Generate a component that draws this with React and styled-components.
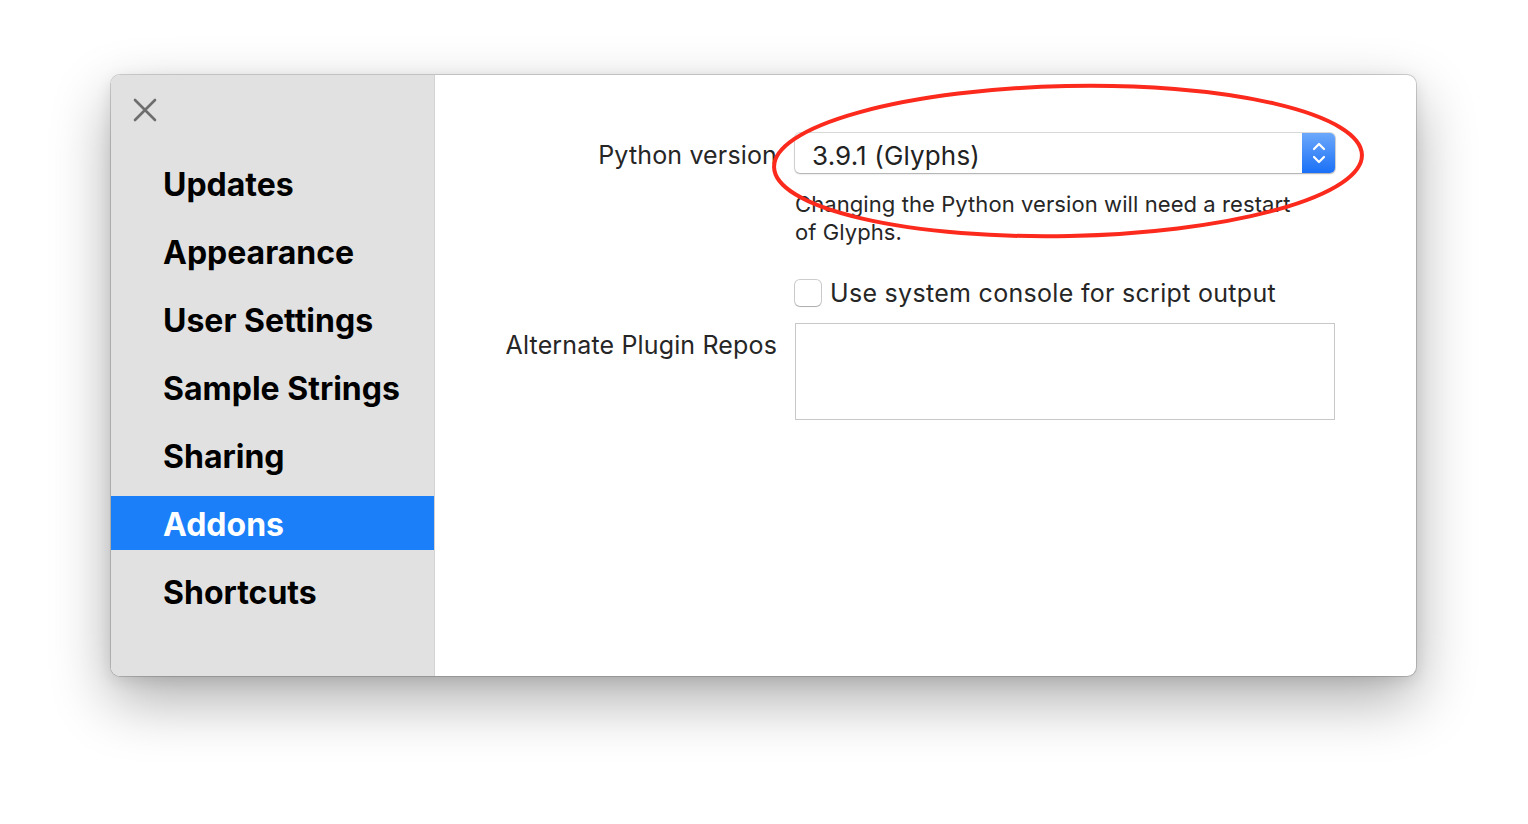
import React from "react";
import styled, { createGlobalStyle } from "styled-components";

const GlobalStyle = createGlobalStyle`
  html, body {
    margin: 0;
    padding: 0;
    background: #ffffff;
  }
  body {
    font-family: Inter, "Noto Sans", "Liberation Sans", sans-serif;
    -webkit-font-smoothing: antialiased;
  }
`;

const Page = styled.div`
  width: 1528px;
  height: 824px;
  padding: 75px 0 0 111px;
  box-sizing: border-box;
`;

const Window = styled.div`
  position: relative;
  width: 1305px;
  height: 601px;
  display: flex;
  border-radius: 9px;
  overflow: hidden;
  background: #fff;
  box-shadow: 0 0 0 1px rgba(0, 0, 0, 0.16), 0 24px 60px rgba(0, 0, 0, 0.32),
    0 4px 16px rgba(0, 0, 0, 0.1);
`;

const Sidebar = styled.nav`
  width: 323px;
  flex-shrink: 0;
  background: #e1e1e1;
  border-right: 1px solid #d2d2d2;
  display: flex;
  flex-direction: column;
  padding-top: 22px;
`;

const CloseButton = styled.button`
  width: 26px;
  height: 26px;
  margin-left: 21px;
  padding: 0;
  border: none;
  background: none;
  display: flex;
  align-items: center;
  justify-content: center;
  margin-bottom: 33px;
`;

const NavList = styled.ul`
  list-style: none;
  margin: 0;
  padding: 0;
  display: flex;
  flex-direction: column;
  gap: 14px;
`;

const NavItem = styled.li`
  height: 54px;
  display: flex;
  align-items: center;
  padding: 3px 0 0 52px;
  box-sizing: border-box;
  font-size: 32px;
  font-weight: 700;
  color: ${(p) => (p.$active ? "#ffffff" : "#000000")};
  background: ${(p) => (p.$active ? "#1a7ff9" : "transparent")};
`;

const Content = styled.main`
  flex: 1;
  display: grid;
  grid-template-columns: 342px 540px;
  column-gap: 18px;
  align-content: start;
  padding-top: 58px;
  color: #262626;
  font-size: 25px;
  letter-spacing: 0.15px;
`;

const Label = styled.div`
  text-align: right;
  line-height: 44px;
  padding-top: ${(p) => p.$top || 0}px;
`;

const Cell = styled.div`
  margin-top: ${(p) => p.$mt || 0}px;
`;

const Popup = styled.div`
  height: 40px;
  display: flex;
  align-items: stretch;
  border-radius: 5px;
  background: #fff;
  box-shadow: 0 0 0 1px rgba(0, 0, 0, 0.14), 0 1px 2px rgba(0, 0, 0, 0.22);
  overflow: hidden;
`;

const PopupValue = styled.div`
  flex: 1;
  display: flex;
  align-items: center;
  padding: 4px 0 0 17px;
  font-size: 26px;
  color: #222;
`;

const Stepper = styled.div`
  width: 33px;
  background: linear-gradient(#6ca8fb, #1a70f7);
  display: flex;
  align-items: center;
  justify-content: center;
`;

const Hint = styled.p`
  margin: 0;
  padding-top: 17px;
  font-size: 22px;
  line-height: 28px;
  color: #262626;
  letter-spacing: 0.08px;
`;

const CheckRow = styled.label`
  display: flex;
  align-items: center;
  gap: 9px;
  font-size: 25px;
  letter-spacing: 0.3px;
  color: #262626;
`;

const Checkbox = styled.span`
  width: 26px;
  height: 26px;
  box-sizing: border-box;
  border-radius: 5px;
  background: #fff;
  box-shadow: 0 0 0 1px rgba(0, 0, 0, 0.2), 0 1px 1px rgba(0, 0, 0, 0.15);
`;

const TextArea = styled.div`
  height: 97px;
  box-sizing: border-box;
  border: 1px solid #c8c8c8;
  background: #fff;
`;

const Annotation = styled.svg`
  position: absolute;
  left: 650px;
  top: 0;
  overflow: visible;
  pointer-events: none;
`;

const items = [
  "Updates",
  "Appearance",
  "User Settings",
  "Sample Strings",
  "Sharing",
  "Addons",
  "Shortcuts",
];

export default function App() {
  return (
    <>
      <GlobalStyle />
      <Page>
        <Window>
          <Sidebar>
            <CloseButton aria-label="Close">
              <svg width="24" height="24" viewBox="0 0 24 24">
                <path
                  d="M2 2 L22 22 M22 2 L2 22"
                  stroke="#6e6e6e"
                  strokeWidth="2.6"
                  strokeLinecap="round"
                />
              </svg>
            </CloseButton>
            <NavList>
              {items.map((name) => (
                <NavItem key={name} $active={name === "Addons"}>
                  {name}
                </NavItem>
              ))}
            </NavList>
          </Sidebar>
          <Content>
            <Label>Python version</Label>
            <Cell>
              <Popup>
                <PopupValue>3.9.1 (Glyphs)</PopupValue>
                <Stepper>
                  <svg width="16" height="26" viewBox="0 0 16 26">
                    <path
                      d="M3 9 L8 4 L13 9 M3 17 L8 22 L13 17"
                      fill="none"
                      stroke="#fff"
                      strokeWidth="2.2"
                      strokeLinecap="round"
                      strokeLinejoin="round"
                    />
                  </svg>
                </Stepper>
              </Popup>
              <Hint>
                Changing the Python version will need a restart
                <br />
                of Glyphs.
              </Hint>
            </Cell>
            <div />
            <Cell $mt={32}>
              <CheckRow>
                <Checkbox />
                Use system console for script output
              </CheckRow>
            </Cell>
            <Label $top={15}>Alternate Plugin Repos</Label>
            <Cell $mt={15}>
              <TextArea />
            </Cell>
          </Content>
          <Annotation width="640" height="200">
            <ellipse
              cx="307"
              cy="86"
              rx="294"
              ry="75"
              transform="rotate(-1.2 307 86)"
              fill="none"
              stroke="#fb2a1d"
              strokeWidth="4"
            />
          </Annotation>
        </Window>
      </Page>
    </>
  );
}
